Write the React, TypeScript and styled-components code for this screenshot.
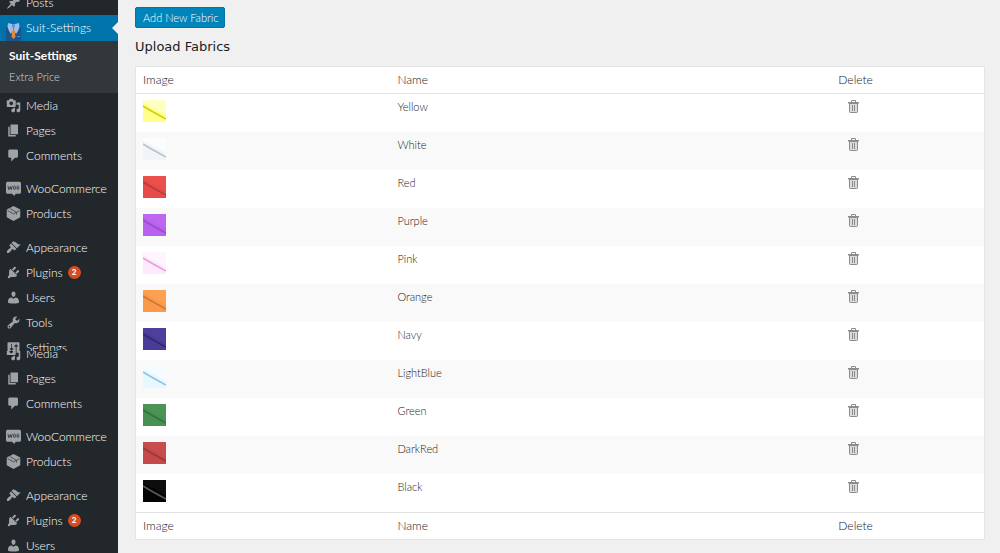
import React from "react";
import styled, { createGlobalStyle, css } from "styled-components";

const GlobalStyle = createGlobalStyle`
  *, *::before, *::after { box-sizing: border-box; }
  body {
    margin: 0;
    background: #f0f0f0;
    color: #15181b;
    font-family: Lato, "Open Sans", sans-serif;
    font-size: 12px;
    font-weight: 300;
    line-height: 16px;
  }
  ul { list-style: none; margin: 0; padding: 0; }
  a { color: inherit; text-decoration: none; }
`;

const Page = styled.div`
  display: flex;
  height: 100vh;
  overflow: hidden;
`;

const Sidebar = styled.nav`
  flex: 0 0 118px;
  background: #22272b;
  overflow: hidden;
  color: #fff;
  font-size: 12px;
`;

const Menu = styled.ul<{ $pull?: number }>`
  overflow: hidden;
  & > li:first-child { margin-top: -${(p) => p.$pull ?? 0}px; }
`;

const MenuItem = styled.li<{ $gap?: number; $cut?: number }>`
  height: ${(p) => p.$cut ?? 25}px;
  margin-top: ${(p) => p.$gap ?? 0}px;
  overflow: hidden;
`;

const MenuLink = styled.a<{ $current?: boolean }>`
  display: flex;
  align-items: center;
  gap: 5px;
  height: ${(p) => (p.$current ? 26 : 25)}px;
  padding-left: 6px;
  white-space: nowrap;
  ${(p) =>
    p.$current &&
    css`
      position: relative;
      background: #0073aa;
      color: #fff;
      &::after {
        content: "";
        position: absolute;
        right: 0;
        top: 7px;
        border: 6px solid transparent;
        border-right-color: #f0f0f0;
        border-left-width: 0;
      }
    `}
`;

const Glyph = styled.svg`
  flex: none;
  width: 15px;
  height: 15px;
  fill: #9ea3a8;
`;

const SuitGlyph = styled.svg`
  flex: none;
  align-self: flex-end;
  width: 15px;
  height: 19px;
`;

const Badge = styled.span`
  width: 13px;
  height: 13px;
  border-radius: 50%;
  background: #d54e21;
  color: #fff;
  font-size: 8px;
  font-weight: 900;
  line-height: 13px;
  text-align: center;
`;

const Submenu = styled.ul`
  height: 52px;
  padding: 4px 9px;
  background: #32373c;
`;

const SubmenuLink = styled.a<{ $current?: boolean }>`
  display: block;
  line-height: 21px;
  font-size: ${(p) => (p.$current ? 12 : 11)}px;
  font-weight: ${(p) => (p.$current ? 700 : 300)};
  color: ${(p) => (p.$current ? "#fff" : "#d4d8db")};
`;

const Main = styled.main`
  flex: 1;
  min-width: 0;
  padding: 7px 15px 13px 17px;
`;

const AddButton = styled.button`
  display: block;
  height: 21px;
  padding: 0 6px 0 7px;
  border: 1px solid #0073aa;
  border-radius: 2px;
  background: #0085ba;
  color: #fff;
  font-family: inherit;
  font-size: 11px;
  font-weight: 300;
  line-height: 18px;
`;

const Title = styled.h1`
  margin: 10px 0;
  color: #181c20;
  font-family: "DejaVu Sans", sans-serif;
  font-size: 13px;
  font-weight: 400;
  line-height: 18px;
`;

const Table = styled.table`
  width: 100%;
  table-layout: fixed;
  border: 1px solid #e5e5e5;
  border-spacing: 0;
  background: #fff;
`;

const Column = styled.col<{ $width?: string }>`
  width: ${(p) => p.$width ?? "auto"};
`;

const HeadCell = styled.th<{ $foot?: boolean }>`
  height: 27px;
  padding: 0 7px;
  border: 0 solid #e1e1e1;
  border-width: ${(p) => (p.$foot ? "1px 0 0" : "0 0 1px")};
  font-size: 12px;
  font-weight: 300;
  text-align: left;
`;

const Row = styled.tr`
  &:nth-child(even) { background: #f9f9f9; }
`;

const Cell = styled.td`
  height: 38px;
  padding: 6px 7px 0;
  vertical-align: top;
  color: #1d2023;
  font-size: 11px;
  line-height: 14px;
`;

const Swatch = styled.svg`
  display: block;
  width: 23px;
  height: 22px;
`;

const DeleteButton = styled.button`
  display: block;
  margin-left: 9px;
  padding: 0;
  border: 0;
  background: none;
  svg { display: block; width: 13px; height: 13px; }
`;

const icons: Record<string, React.ReactNode> = {
  Posts: (
    <path d="M10.44 3.02l1.82-1.82 6.36 6.35-1.83 1.82c-1.05-.68-2.48-.57-3.41.36l-.75.75c-.92.93-1.04 2.35-.35 3.41l-1.83 1.82-2.41-2.41-2.8 2.79c-.42.42-3.38 2.71-3.8 2.29s1.86-3.39 2.28-3.81l2.79-2.79L4.1 9.36l1.83-1.82c1.05.69 2.48.57 3.4-.36l.75-.75c.93-.92 1.05-2.35.36-3.41z" />
  ),
  Media: (
    <path d="M13 11V4c0-.55-.45-1-1-1h-1.670L9 1H5L3.670 3H2c-.55 0-1 .45-1 1v7c0 .55.45 1 1 1h10c.55 0 1-.45 1-1zM7 4.500c1.380 0 2.500 1.120 2.500 2.500S8.380 9.500 7 9.500 4.500 8.380 4.500 7 5.620 4.500 7 4.500zM14 6h5v10.500c0 1.380-1.120 2.500-2.500 2.500S14 17.880 14 16.500s1.120-2.500 2.500-2.500c.17 0 .34.02.5.05V9h-3V6zm-4 8.050V13h2v3.500c0 1.380-1.120 2.500-2.500 2.500S7 17.880 7 16.500 8.120 14 9.500 14c.17 0 .34.02.5.05z" />
  ),
  Pages: <path d="M6 15V2h10v13H6zm-1 1h8v2H3V5h2v11z" />,
  Comments: (
    <path d="M5 2h9c1.1 0 2 .9 2 2v7c0 1.1-.9 2-2 2h-2l-5 5v-5H5c-1.100 0-2-.9-2-2V4c0-1.100.9-2 2-2z" />
  ),
  WooCommerce: (
    <>
      <path d="M2 1h16q2 0 2 2v12q0 2-2 2h-5l-2 3-3-3H2q-2 0-2-2V3q0-2 2-2z" />
      <path
        fill="none"
        stroke="#3a3f44"
        strokeWidth="1.300"
        d="M2.500 6.500l1.300 5 1.900-4 1.200 4 1.500-5M10 9a1.300 2.300 0 1 0 2.600 0a1.300 2.300 0 1 0-2.600 0M14.500 9a1.300 2.300 0 1 0 2.600 0a1.300 2.300 0 1 0-2.600 0"
      />
    </>
  ),
  Products: (
    <>
      <path d="M10 0l9 4.500v10.500L10 20l-9-5V4.500z" />
      <path fill="none" stroke="#32373c" strokeWidth="1" d="M2 6l8 4.500L18 6M5.500 3.500l8.500 5v3" />
    </>
  ),
  Appearance: (
    <path d="M14.480 11.060L7.410 3.990l1.500-1.500c.5-.56 2.300-.47 3.510.32 1.210.8 1.430 1.280 2.910 2.100 1.180.64 2.450 1.260 4.450.85zm-.71.71L6.700 4.700 4.930 6.470c-.39.39-.39 1.020 0 1.410l1.060 1.060c.39.39.39 1.030 0 1.420-.6.6-1.430 1.110-2.210 1.690-.35.26-.7.53-1.010.84C1.430 14.230.4 16.080 1.400 17.070c.99 1 2.840-.03 4.180-1.360.31-.31.58-.66.85-1.020.57-.78 1.080-1.610 1.690-2.210.39-.39 1.020-.39 1.410 0l1.060 1.060c.39.39 1.020.39 1.410 0z" />
  ),
  Plugins: (
    <path d="M13.110 4.360L9.870 7.600 8 5.730l3.240-3.240c.35-.34 1.050-.2 1.560.32.52.51.66 1.210.31 1.550zm-8 1.770l.91-1.120 9.010 9.010-1.190.84c-.71.71-2.630 1.160-3.820 1.160H6.140L4.900 17.260c-.59.59-1.540.59-2.120 0-.59-.58-.59-1.530 0-2.120l1.240-1.240v-3.880c0-1.130.4-3.190 1.090-3.890zm7.260 3.970l3.240-3.240c.34-.35 1.040-.21 1.550.31.52.51.66 1.210.31 1.550l-3.240 3.250z" />
  ),
  Users: (
    <path d="M10 9.250c-2.270 0-2.730-3.440-2.730-3.440C7 4.020 7.820 2 9.970 2c2.160 0 2.980 2.020 2.710 3.810 0 0-.41 3.440-2.680 3.440zm0 2.570L12.720 10c2.390 0 4.520 2.330 4.520 4.530v2.490s-3.650 1.130-7.240 1.130c-3.650 0-7.240-1.130-7.240-1.130v-2.490c0-2.250 1.940-4.480 4.470-4.480z" />
  ),
  Tools: (
    <path d="M16.680 9.770c-1.340 1.340-3.300 1.670-4.950.99l-5.410 6.520c-.99.99-2.590.99-3.580 0s-.99-2.590 0-3.570l6.520-5.420c-.68-1.650-.35-3.610.99-4.950 1.280-1.280 3.120-1.620 4.720-1.060l-2.890 2.890 2.820 2.820 2.860-2.870c.53 1.580.18 3.390-1.080 4.650zM3.810 16.210c.4.39 1.040.39 1.430 0 .4-.4.4-1.040 0-1.430-.39-.4-1.030-.4-1.430 0-.39.39-.39 1.030 0 1.430z" />
  ),
  Settings: (
    <path d="M18 16V4c0-.55-.45-1-1-1H3c-.55 0-1 .45-1 1v12c0 .55.45 1 1 1h14c.55 0 1-.45 1-1zM8 11h1c.55 0 1 .45 1 1s-.45 1-1 1H8v1.500c0 .28-.22.5-.5.5s-.5-.22-.5-.5V13H6c-.55 0-1-.45-1-1s.45-1 1-1h1V5.500c0-.28.22-.5.5-.5s.5.22.5.5V11zm5-2h-1c-.55 0-1-.45-1-1s.45-1 1-1h1V5.500c0-.28.22-.5.5-.5s.5.22.5.5V7h1c.55 0 1 .45 1 1s-.45 1-1 1h-1v5.500c0 .28-.22.5-.5.5s-.5-.22-.5-.5V9z" />
  ),
};

type Entry = { label: string; gap?: number; cut?: number; count?: number };

const firstMenu: Entry[] = [
  { label: "Media" },
  { label: "Pages" },
  { label: "Comments" },
  { label: "WooCommerce", gap: 8 },
  { label: "Products" },
  { label: "Appearance", gap: 9 },
  { label: "Plugins", count: 2 },
  { label: "Users" },
  { label: "Tools" },
  { label: "Settings", cut: 16 },
];

const secondMenu: Entry[] = firstMenu.slice(0, 8);

const fabrics = [
  { name: "Yellow", base: "#ffff8c", light: "#ffffc4", fold: "#d3cf00" },
  { name: "White", base: "#f1f5f7", light: "#fafcfd", fold: "#bcc1c5" },
  { name: "Red", base: "#e84a48", light: "#ea504c", fold: "#b43c3c" },
  { name: "Purple", base: "#b961ee", light: "#bd66f0", fold: "#944fc0" },
  { name: "Pink", base: "#ffeafd", light: "#fff5fe", fold: "#e3a0dc" },
  { name: "Orange", base: "#fa9a48", light: "#fda050", fold: "#c47a40" },
  { name: "Navy", base: "#483c98", light: "#4c409c", fold: "#30286e" },
  { name: "LightBlue", base: "#e8f8ff", light: "#f5fcff", fold: "#8cc6e2" },
  { name: "Green", base: "#489052", light: "#4c9456", fold: "#347040" },
  { name: "DarkRed", base: "#c44a4a", light: "#c84e4e", fold: "#98383c" },
  { name: "Black", base: "#050404", light: "#0e0c0c", fold: "#5a5a5a" },
];

function Icon({ name }: { name: string }) {
  return (
    <Glyph viewBox="0 0 20 20" aria-hidden="true">
      {icons[name]}
    </Glyph>
  );
}

function SuitIcon() {
  return (
    <SuitGlyph viewBox="0 0 15 19" aria-hidden="true">
      <path fill="#1c5389" d="M0 5h15v14H0z" />
      <path fill="#9dbdf0" d="M2 1l4 1 1.500 6L5 12 3 9 1.500 5z" />
      <path fill="#9dbdf0" d="M13 1L9 2 7.500 8l2.500 4 2-3 1.500-4z" />
      <path fill="#6d93d6" d="M6 2h3L7.500 7z" />
      <path fill="#e8892b" d="M6.500 8h2l1 7-2 2-2-2z" />
      <path fill="#4b95d8" d="M11 14h3v1h-3z" />
    </SuitGlyph>
  );
}

function Entries({ items, pull }: { items: Entry[]; pull?: number }) {
  return (
    <Menu $pull={pull}>
      {items.map((item) => (
        <MenuItem key={item.label} $gap={item.gap} $cut={item.cut}>
          <MenuLink href="#">
            <Icon name={item.label} />
            {item.label}
            {item.count && <Badge>{item.count}</Badge>}
          </MenuLink>
        </MenuItem>
      ))}
    </Menu>
  );
}

function TrashIcon() {
  return (
    <svg viewBox="0 0 13 13" aria-hidden="true">
      <path fill="#dcdcdc" d="M2 4h9v8.500H2z" />
      <path
        fill="none"
        stroke="#8c8c8c"
        d="M1 2.500h11M1.500 3.500h10M4.500 2v-1.500h4v1.500M2.500 4v7.500q0 1 1 1h6q1 0 1-1v-7.500M5.500 5v6M7.500 5v6"
      />
    </svg>
  );
}

function HeaderRow({ foot }: { foot?: boolean }) {
  return (
    <tr>
      {["Image", "Name", "Delete"].map((label) => (
        <HeadCell key={label} $foot={foot}>
          {label}
        </HeadCell>
      ))}
    </tr>
  );
}

export default function App() {
  return (
    <>
      <GlobalStyle />
      <Page>
        <Sidebar>
          <Menu $pull={10}>
            <MenuItem>
              <MenuLink href="#">
                <Icon name="Posts" />
                Posts
              </MenuLink>
            </MenuItem>
            <li>
              <MenuLink href="#" $current>
                <SuitIcon />
                Suit-Settings
              </MenuLink>
              <Submenu>
                <li>
                  <SubmenuLink href="#" $current>
                    Suit-Settings
                  </SubmenuLink>
                </li>
                <li>
                  <SubmenuLink href="#">Extra Price</SubmenuLink>
                </li>
              </Submenu>
            </li>
          </Menu>
          <Entries items={firstMenu} />
          <Entries items={secondMenu} pull={10} />
        </Sidebar>
        <Main>
          <AddButton type="button">Add New Fabric</AddButton>
          <Title>Upload Fabrics</Title>
          <Table>
            <colgroup>
              <Column $width="30%" />
              <Column $width="52%" />
              <Column />
            </colgroup>
            <thead>
              <HeaderRow />
            </thead>
            <tbody>
              {fabrics.map((f) => (
                <Row key={f.name}>
                  <Cell>
                    <Swatch viewBox="0 0 23 22" role="img" aria-label={f.name}>
                      <path fill={f.base} d="M0 0h23v22H0z" />
                      <path fill={f.light} d="M0 0h23v15L0 3z" />
                      <path stroke={f.fold} strokeWidth="1.500" fill="none" d="M0 6q8 5 23 13" />
                    </Swatch>
                  </Cell>
                  <Cell>{f.name}</Cell>
                  <Cell>
                    <DeleteButton type="button" aria-label={`Delete ${f.name}`}>
                      <TrashIcon />
                    </DeleteButton>
                  </Cell>
                </Row>
              ))}
            </tbody>
            <tfoot>
              <HeaderRow foot />
            </tfoot>
          </Table>
        </Main>
      </Page>
    </>
  );
}
